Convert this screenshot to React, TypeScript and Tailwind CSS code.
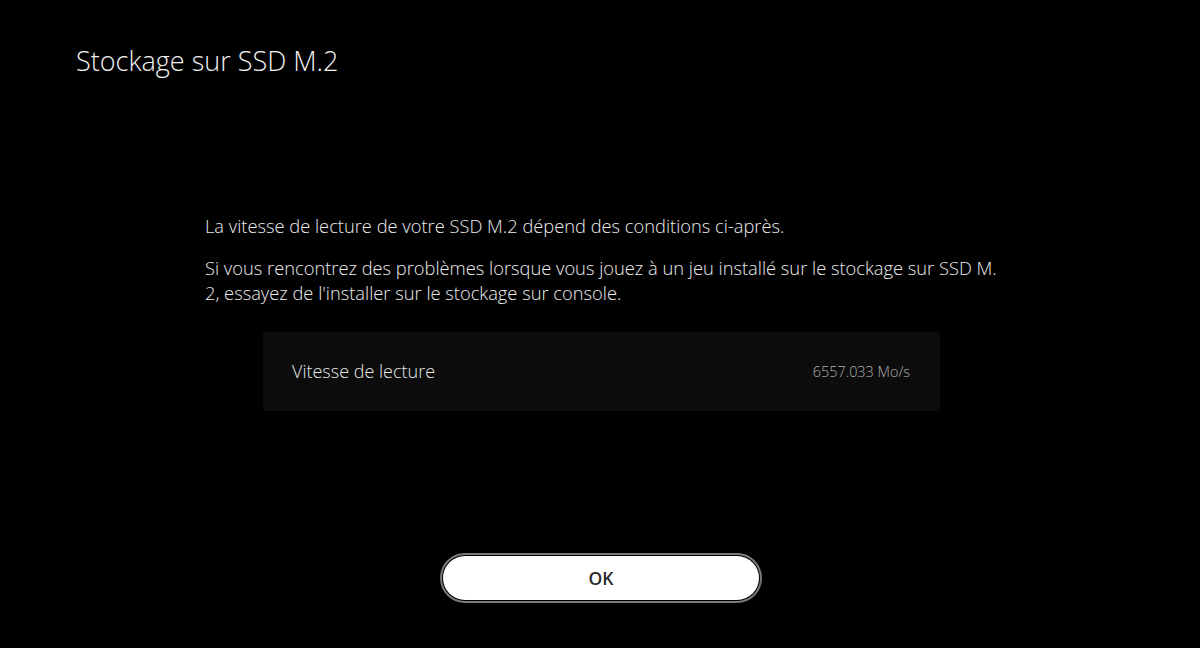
import React from 'react';

const App = () => {
  return (
    <div className="w-[1200px] h-[648px] bg-black text-white flex flex-col" style={{ fontFamily: '"Open Sans", "Noto Sans", sans-serif' }}>
      <h1 className="pl-[76px] pt-[43px] text-[27px] font-light leading-[36px] text-[#f0f0f0]">Stockage sur SSD M.2</h1>

      <div className="pl-[205px] mt-[134px] text-[18.3px] font-light leading-[25px] text-[#ececec]">
        <p>La vitesse de lecture de votre SSD M.2 dépend des conditions ci-après.</p>
        <p className="mt-[17px]">
          Si vous rencontrez des problèmes lorsque vous jouez à un jeu installé sur le stockage sur SSD M.
          <br />
          2, essayez de l'installer sur le stockage sur console.
        </p>
      </div>

      <div className="ml-[263px] mt-[27px] w-[677px] h-[79px] bg-[#0c0c0c] flex items-center justify-between pl-[29px] pr-[30px]">
        <span className="text-[18px] font-light text-[#e8e8e8]">Vitesse de lecture</span>
        <span className="text-[14.4px] font-light text-[#b0b0b0]">6557.033 Mo/s</span>
      </div>

      <div className="flex justify-center mt-[142px] pl-[2px]">
        <button className="w-[322px] h-[50px] rounded-full border-[2px] border-[#7a7a7a] p-[1px] bg-black">
          <div className="w-full h-full rounded-full bg-white flex items-center justify-center text-[17.5px] font-semibold text-[#2a2a2a]">
            OK
          </div>
        </button>
      </div>
    </div>
  );
};

export default App;
